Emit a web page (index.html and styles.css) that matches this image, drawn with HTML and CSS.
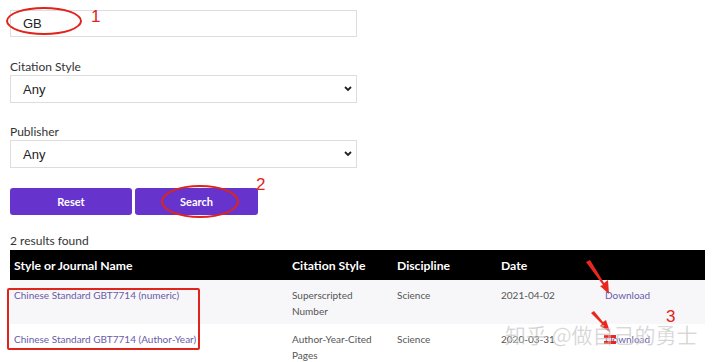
FILE: index.html
```html
<!DOCTYPE html>
<html lang="en">
<head>
    <meta charset="UTF-8">
    <meta name="viewport" content="width=device-width, initial-scale=1.0">
    <title>Style Search</title>
    <link rel="stylesheet" href="styles.css">
</head>
<body>
    <div class="page">
        <div class="search-form">
            <input type="text" class="field" value="GB" />
            <div class="group">
                <label for="citation">Citation Style</label>
                <select id="citation" class="field">
                    <option>Any</option>
                </select>
            </div>
            <div class="group">
                <label for="publisher">Publisher</label>
                <select id="publisher" class="field">
                    <option>Any</option>
                </select>
            </div>
            <div class="buttons">
                <button class="btn">Reset</button>
                <button class="btn">Search</button>
            </div>
        </div>

        <p class="count">2 results found</p>

        <table class="results">
            <thead>
                <tr>
                    <th class="c-name">Style or Journal Name</th>
                    <th class="c-style">Citation Style</th>
                    <th class="c-disc">Discipline</th>
                    <th class="c-date">Date</th>
                    <th class="c-dl"></th>
                </tr>
            </thead>
            <tbody>
                <tr class="odd">
                    <td><a href="#">Chinese Standard GBT7714 (numeric)</a></td>
                    <td>Superscripted<br>Number</td>
                    <td>Science</td>
                    <td>2021-04-02</td>
                    <td><a href="#">Download</a></td>
                </tr>
                <tr>
                    <td><a href="#">Chinese Standard GBT7714 (Author-Year)</a></td>
                    <td>Author-Year-Cited<br>Pages</td>
                    <td>Science</td>
                    <td>2020-03-31</td>
                    <td><a href="#">Download</a></td>
                </tr>
            </tbody>
        </table>

        <!-- red annotations drawn over the screenshot -->
        <div class="mark ring ring-1"></div>
        <span class="mark num num-1">1</span>
        <div class="mark ring ring-2"></div>
        <span class="mark num num-2">2</span>
        <div class="mark box"></div>
        <span class="mark num num-3">3</span>
        <svg class="mark arrows" width="720" height="362" viewBox="0 0 720 362">
            <polygon points="586,262 590,260 604,283 608,280 609,294 600,286 603,285" fill="#e8281e"/>
            <polygon points="591,313 594,311 603,322 606,320 610,332 600,326 602,324" fill="#e8281e"/>
            <rect x="604" y="335" width="12" height="3" fill="#e8281e"/>
            <rect x="604" y="341" width="12" height="3" fill="#e8281e"/>
        </svg>
        <span class="mark watermark">知乎 @做自己的勇士</span>
    </div>
</body>
</html>
```

FILE: styles.css
```css
body {
    margin: 0;
    font-family: Lato, 'Noto Sans', sans-serif;
    color: #333;
    background: #fff;
}

.page {
    position: relative;
    padding: 10px;
    height: 342px;
    overflow: hidden;
}

.search-form {
    width: 347px;
}

.field {
    display: block;
    box-sizing: border-box;
    width: 100%;
    height: 27px;
    border: 1px solid #ddd;
    background: #fff;
    font-family: 'Liberation Sans', Arial, sans-serif;
    font-size: 13px;
    color: #222;
    padding: 0 12px;
    border-radius: 0;
}

select.field {
    height: 28px;
    appearance: none;
    -webkit-appearance: none;
    background-image: url("data:image/svg+xml,%3Csvg xmlns='http://www.w3.org/2000/svg' width='8' height='6'%3E%3Cpath d='M1 1l3 3 3-3' fill='none' stroke='%23222' stroke-width='1.8'/%3E%3C/svg%3E");
    background-repeat: no-repeat;
    background-position: right 4px center;
}

.group {
    margin-top: 22px;
}

.group + .group {
    margin-top: 21px;
}

.group label {
    display: block;
    font-size: 12px;
    line-height: 16px;
    color: #333;
}

.buttons {
    display: flex;
    gap: 3px;
    margin-top: 20px;
}

.btn {
    width: 122px;
    height: 27px;
    background-color: #6633cc;
    color: #fff;
    border: none;
    border-radius: 3px;
    font-family: Lato, sans-serif;
    font-weight: bold;
    font-size: 11px;
}

.btn + .btn {
    width: 123px;
}

.count {
    margin: 18px 0 0;
    font-size: 12px;
    line-height: 16px;
}

.results {
    width: 695px;
    margin-top: 1px;
    border-collapse: collapse;
    font-size: 10px;
}

.results th {
    background: #000;
    color: #fff;
    text-align: left;
    font-size: 12.2px;
    font-weight: bold;
    height: 30px;
    padding: 0 4px;
}

.results td {
    vertical-align: top;
    padding: 7px 4px 5px;
    line-height: 16px;
    color: #555;
}

.results tr.odd td {
    background: #f7f7f9;
}

.c-name { width: 270px; }
.c-style { width: 97px; }
.c-disc { width: 96px; }
.c-date { width: 96px; }

.results a {
    color: #6a5aa8;
    text-decoration: none;
}

.mark {
    position: absolute;
}

.ring {
    border: 2px solid #e0241c;
    border-radius: 50%;
}

.ring-1 {
    left: 6px;
    top: 7px;
    width: 72px;
    height: 24px;
}

.ring-2 {
    left: 161px;
    top: 185px;
    width: 74px;
    height: 29px;
}

.num {
    color: #e0241c;
    font-family: 'Liberation Sans', Arial, sans-serif;
    font-size: 17px;
    line-height: 17px;
}

.num-1 { left: 91px; top: 8px; }
.num-2 { left: 256px; top: 176px; }
.num-3 { left: 666px; top: 308px; }

.box {
    left: 7px;
    top: 288px;
    width: 189px;
    height: 58px;
    border: 2px solid #e0241c;
    border-radius: 2px;
}

.arrows {
    left: 0;
    top: 0;
}

.watermark {
    left: 505px;
    top: 321px;
    font-family: 'Noto Sans CJK SC', sans-serif;
    font-size: 21px;
    line-height: 26px;
    color: rgba(160, 160, 160, 0.5);
    -webkit-text-stroke: 0.5px rgba(255, 255, 255, 0.6);
    white-space: nowrap;
}
```
